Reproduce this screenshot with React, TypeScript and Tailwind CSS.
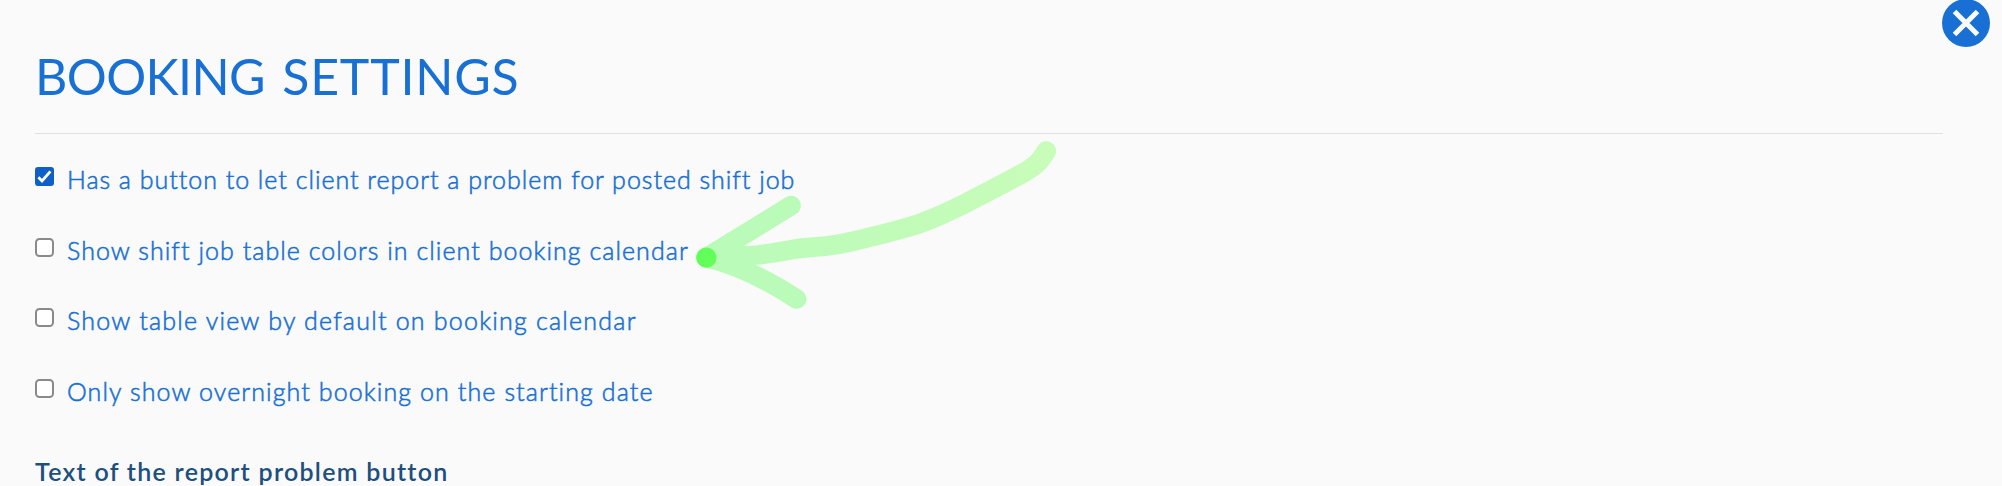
import { useState } from "react";

type SettingProps = {
  label: string;
  spacing: string;
  defaultChecked?: boolean;
};

const settings: SettingProps[] = [
  {
    label: "Has a button to let client report a problem for posted shift job",
    spacing: "tracking-[0.98px]",
    defaultChecked: true,
  },
  {
    label: "Show shift job table colors in client booking calendar",
    spacing: "tracking-[1.05px]",
  },
  {
    label: "Show table view by default on booking calendar",
    spacing: "tracking-[1.22px]",
  },
  {
    label: "Only show overnight booking on the starting date",
    spacing: "tracking-[1.1px]",
  },
];

function Setting({ label, spacing, defaultChecked = false }: SettingProps) {
  const [checked, setChecked] = useState(defaultChecked);
  return (
    <label className="flex h-[70.5px] items-start gap-[13px]">
      <span className="mt-[7px] grid size-[19px] shrink-0">
        <input
          type="checkbox"
          checked={checked}
          onChange={() => setChecked(!checked)}
          className="col-start-1 row-start-1 size-[19px] appearance-none rounded-[4.5px] border-2 border-[#8a8a8a] bg-white checked:rounded-[3px] checked:border-[#0f5fc8] checked:bg-[#0f5fc8]"
        />
        {checked && (
          <svg
            viewBox="0 0 19 19"
            className="pointer-events-none col-start-1 row-start-1 size-[19px]"
          >
            <path
              d="M3.4 10.2 7 13.9 15.4 4.3"
              fill="none"
              stroke="white"
              strokeWidth="2.8"
            />
          </svg>
        )}
      </span>
      <span
        className={`whitespace-nowrap text-[25px] leading-[38px] font-light text-[#1870d5] [-webkit-text-stroke:0.55px_#1870d5] ${spacing}`}
      >
        {label}
      </span>
    </label>
  );
}

function Arrow() {
  return (
    <svg
      viewBox="0 0 1200 570"
      className="pointer-events-none absolute top-[130px] left-[680px] h-[190px] w-[400px]"
      fill="none"
      strokeLinecap="round"
      strokeLinejoin="round"
    >
      <defs>
        <linearGradient
          id="shaft"
          gradientUnits="userSpaceOnUse"
          x1="200"
          y1="0"
          x2="1120"
          y2="0"
        >
          <stop offset="0" stopColor="#bbfbb9" />
          <stop offset="1" stopColor="#c8fcb9" />
        </linearGradient>
      </defs>
      <path
        d="M1099 63C1080 92 1073 103 1038 124C995 149 930 182 860 218C800 248 740 275 690 290C650 302 610 312 580 319C520 335 480 345 430 349C400 352 370 352 340 358C270 371 240 376 200 377L79 383"
        stroke="url(#shaft)"
        strokeWidth="59"
      />
      <path
        d="M333 227 110 364 79 383C160 401 245 439 350 507"
        stroke="#bbfbb9"
        strokeWidth="59"
      />
      <circle cx="79" cy="383" r="30.5" fill="#62ff5a" />
    </svg>
  );
}

export default function App() {
  return (
    <div className="relative flex h-[486px] w-[2002px] items-start overflow-hidden bg-[#fafafa] pl-[35px] font-['Lato',sans-serif]">
      <main className="w-[1908px] shrink-0">
        <h1 className="flex h-[134px] items-start gap-[5px] border-b border-[#e0e0e0] pt-[46px] text-[50px] leading-[60px] text-[#1870d5]">
          <span className="tracking-[-0.6px] whitespace-pre">BOOKING </span>
          <span className="tracking-[0.8px]">SETTINGS</span>
        </h1>
        <section className="pt-[26px]">
          {settings.map((setting) => (
            <Setting key={setting.label} {...setting} />
          ))}
        </section>
        <h2 className="mt-[10px] text-[25px] leading-[38px] font-semibold tracking-[1.27px] whitespace-nowrap text-[#204f7d]">
          Text of the report problem button
        </h2>
      </main>
      <button
        aria-label="Close"
        className="-mt-px -ml-px grid size-12 shrink-0 place-items-center rounded-full bg-[#1870d5]"
      >
        <svg viewBox="0 0 48 48" className="size-12">
          <path
            d="m12.5 12.5 23 23m0-23-23 23"
            stroke="#fafafa"
            strokeWidth="5"
          />
        </svg>
      </button>
      <Arrow />
    </div>
  );
}
